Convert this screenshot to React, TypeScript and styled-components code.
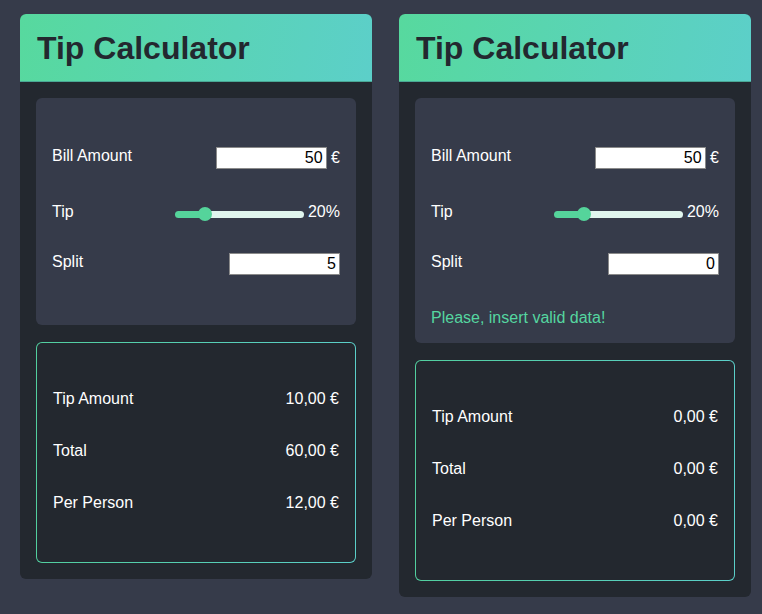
import React, { useState } from "react";
import styled, { createGlobalStyle } from "styled-components";

const GlobalStyle = createGlobalStyle`
  html, body {
    margin: 0;
    padding: 0;
    background: #363b4a;
    font-family: "Liberation Sans", Arial, sans-serif;
  }
  #root { min-height: 100vh; }
`;

const Page = styled.div`
  display: flex;
  align-items: flex-start;
  gap: 27px;
  padding: 14px 0 14px 20px;
`;

const Card = styled.section`
  flex: 0 0 352px;
  width: 352px;
  background: #23282f;
  border-radius: 6px;
  overflow: hidden;
`;

const Header = styled.h1`
  margin: 0;
  padding: 16px 17px 14px;
  font-size: 32px;
  font-weight: 700;
  line-height: normal;
  color: #23282f;
  background: linear-gradient(100deg, #57d99e 0%, #5ccfc9 100%);
  border-bottom: 1px solid #4aa895;
`;

const Body = styled.div`
  display: flex;
  flex-direction: column;
  gap: 17px;
  padding: 16px;
`;

const Panel = styled.div`
  background: #363b4a;
  border-radius: 6px;
  padding: 16px;
`;

const Form = styled.div`
  display: flex;
  flex-direction: column;
  gap: 32px;
  padding: 33px 0 32px;
`;

const Row = styled.div`
  display: flex;
  justify-content: space-between;
  align-items: flex-start;
  color: #ffffff;
  font-size: 16px;
  line-height: normal;
`;

const Label = styled.label`
  color: #ffffff;
`;

const Controls = styled.div<{ $padBottom?: number }>`
  display: flex;
  align-items: flex-start;
  padding-bottom: ${(p) => p.$padBottom ?? 0}px;
  white-space: pre;
`;

const NumberInput = styled.input`
  box-sizing: border-box;
  width: 111px;
  height: 22px;
  padding: 1px 3px;
  margin: 0;
  border: 1px solid #8a8a8a;
  border-radius: 0;
  background: #ffffff;
  color: #000000;
  font-family: "Liberation Sans", Arial, sans-serif;
  font-size: 16px;
  text-align: right;
  outline: none;
`;

const Unit = styled.span`
  line-height: 22px;
`;

const Slider = styled.input`
  -webkit-appearance: none;
  appearance: none;
  width: 129px;
  height: 14px;
  margin: 4px 4px 0 0;
  padding: 0;
  background: transparent;
  &::-webkit-slider-runnable-track {
    height: 7px;
    border-radius: 4px;
    background: linear-gradient(
      to right,
      #55d49b 0,
      #55d49b var(--fill),
      #e0f5ee var(--fill),
      #e0f5ee 100%
    );
  }
  &::-webkit-slider-thumb {
    -webkit-appearance: none;
    appearance: none;
    width: 14px;
    height: 14px;
    border: none;
    border-radius: 50%;
    background: #55d49b;
    margin-top: -3.5px;
  }
`;

const ErrorText = styled.p`
  margin: 0;
  color: #55d6a0;
  font-size: 16px;
  line-height: normal;
`;

const ResultBox = styled.div`
  border: 1px solid transparent;
  border-radius: 6px;
  background:
    linear-gradient(#23282f, #23282f) padding-box,
    linear-gradient(to right, #52cf9f, #5bcfc9) border-box;
  padding: 16px;
`;

const ResultList = styled.div`
  display: flex;
  flex-direction: column;
  gap: 34px;
  padding: 31px 0 33.8px;
`;

const ResultRow = styled.div`
  display: flex;
  justify-content: space-between;
  color: #ffffff;
  font-size: 16px;
  line-height: normal;
`;

const fmt = (n: number) => n.toFixed(2).replace(".", ",") + " €";

function Calculator({ bill0, tip0, split0 }: { bill0: string; tip0: number; split0: string }) {
  const [bill, setBill] = useState(bill0);
  const [tip, setTip] = useState(tip0);
  const [split, setSplit] = useState(split0);

  const b = parseFloat(bill);
  const s = parseInt(split, 10);
  const valid = b > 0 && s > 0;
  const tipAmount = valid ? (b * tip) / 100 : 0;
  const total = valid ? b + tipAmount : 0;
  const perPerson = valid ? total / s : 0;

  const fillStyle = {
    "--fill": `calc(7px + (100% - 14px) * ${tip / 100})`,
  } as React.CSSProperties;

  return (
    <Card>
      <Header>Tip Calculator</Header>
      <Body>
        <Panel>
          <Form>
            <Row>
              <Label>Bill Amount</Label>
              <Controls $padBottom={2}>
                <NumberInput value={bill} onChange={(e) => setBill(e.target.value)} />
                <Unit> €</Unit>
              </Controls>
            </Row>
            <Row>
              <Label>Tip</Label>
              <Controls>
                <Slider
                  type="range"
                  min={0}
                  max={100}
                  value={tip}
                  style={fillStyle}
                  onChange={(e) => setTip(Number(e.target.value))}
                />
                <span>{tip}%</span>
              </Controls>
            </Row>
            <Row>
              <Label>Split</Label>
              <Controls $padBottom={2}>
                <NumberInput value={split} onChange={(e) => setSplit(e.target.value)} />
              </Controls>
            </Row>
          </Form>
          {!valid && <ErrorText>Please, insert valid data!</ErrorText>}
        </Panel>
        <ResultBox>
          <ResultList>
            <ResultRow>
              <span>Tip Amount</span>
              <span>{fmt(tipAmount)}</span>
            </ResultRow>
            <ResultRow>
              <span>Total</span>
              <span>{fmt(total)}</span>
            </ResultRow>
            <ResultRow>
              <span>Per Person</span>
              <span>{fmt(perPerson)}</span>
            </ResultRow>
          </ResultList>
        </ResultBox>
      </Body>
    </Card>
  );
}

export default function App() {
  return (
    <>
      <GlobalStyle />
      <Page>
        <Calculator bill0="50" tip0={20} split0="5" />
        <Calculator bill0="50" tip0={20} split0="0" />
      </Page>
    </>
  );
}
